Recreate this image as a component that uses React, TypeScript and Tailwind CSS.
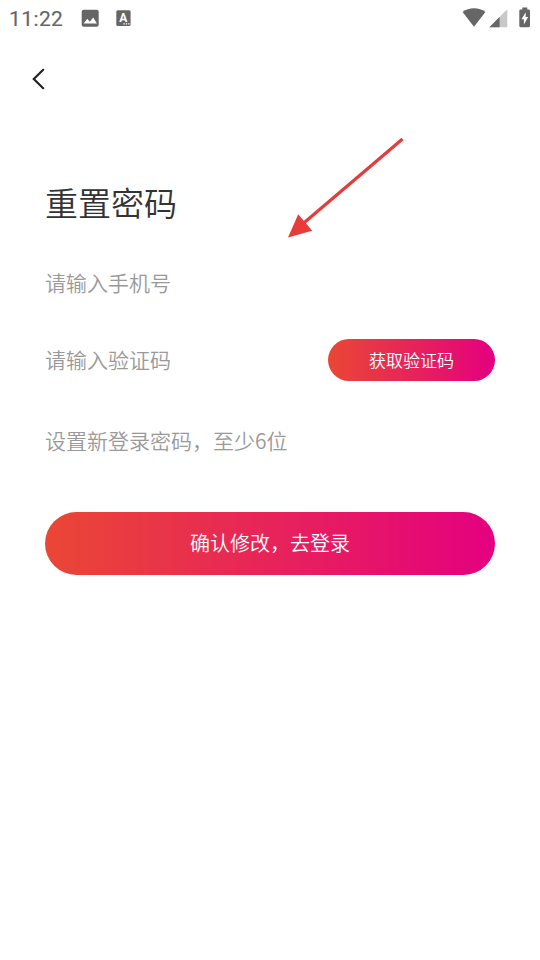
import React, { useState } from 'react';

const StatusBar: React.FC = () => (
  <header className="flex h-9 items-center justify-between pl-[9px] pr-[9px] text-[#666666]">
    <div className="flex items-center">
      <span className="w-[54px] whitespace-nowrap pt-0.5 font-['Roboto',sans-serif] text-[21px] font-normal leading-9 tracking-[0.4px] [-webkit-text-stroke:0.15px_#666666]">
        11:22
      </span>
      <svg className="ml-[18px]" width="18" height="18" viewBox="0 0 18 18" aria-hidden="true">
        <rect x="0.7" y="0.8" width="17" height="17" rx="2" fill="currentColor" />
        <path d="M2.6 14.500 6.300 9.800l2.500 3 3.400-4.300 3.700 6z" fill="#fff" />
      </svg>
      <svg className="ml-[17px]" width="16" height="18" viewBox="0 0 16 18" aria-hidden="true">
        <rect x="0.300" y="1.300" width="14.300" height="15.600" rx="1.500" fill="currentColor" />
        <text
          x="7.400"
          y="12.800"
          textAnchor="middle"
          fill="#fff"
          className="font-['Roboto',sans-serif] text-[12px] font-bold"
        >
          A
        </text>
        <path d="M7.400 14.900h1.400M9.800 14.900h1.400M12.200 14.900h1.400" stroke="#fff" strokeWidth="1.300" />
      </svg>
    </div>

    <div className="flex items-center">
      <svg width="24" height="20" viewBox="0 0 24 20" aria-hidden="true">
        <path d="M0.6 3.9C3.8 1.5 7.7 0.3 12 0.3s8.2 1.2 11.4 3.6L12 18.700z" fill="currentColor" />
      </svg>
      <svg className="ml-[3px]" width="19" height="19" viewBox="0 0 19 19" aria-hidden="true">
        <path d="M18.300 0.300v18H0.300z" fill="#c8c8c8" />
        <path d="M10.600 8v10.300H0.300z" fill="currentColor" />
      </svg>
      <svg className="mb-0.5 ml-[11px]" width="12" height="21" viewBox="0 0 12 21" aria-hidden="true">
        <path
          d="M3.300 0.500h5v2h1.300c.8 0 1.400.6 1.400 1.400v14.900c0 .8-.6 1.400-1.400 1.400H1.700c-.8 0-1.400-.6-1.400-1.400V3.900c0-.8.6-1.400 1.400-1.400h1.600z"
          fill="currentColor"
        />
        <path d="M6.700 5.200 2.500 12.200h2.400v5.200l4.200-7.400H6.700z" fill="#fff" />
      </svg>
    </div>
  </header>
);

// Annotation arrow pointing at the form
const PointerArrow: React.FC = () => (
  <svg
    className="pointer-events-none absolute left-[280px] top-[130px]"
    width="130"
    height="115"
    viewBox="0 0 130 115"
    aria-hidden="true"
  >
    <path d="M122.500 9 22 94.500" stroke="#e23c3c" strokeWidth="3.200" />
    <path d="M8 107.500 18.200 84.200 32.200 100.800z" fill="#e83c3a" />
  </svg>
);

const fieldClass =
  'h-[42px] min-w-0 flex-1 bg-transparent text-[21px] leading-[42px] text-[#333333] outline-none placeholder:text-[#999999] placeholder:opacity-100';

const App: React.FC = () => {
  const [phone, setPhone] = useState('');
  const [code, setCode] = useState('');
  const [password, setPassword] = useState('');

  return (
    <div className="relative min-h-[960px] w-full bg-white font-['Noto_Sans_CJK_SC',sans-serif] font-[350]">
      <StatusBar />

      <nav className="flex h-[86px] items-center pl-[31px]">
        <button type="button" aria-label="返回">
          <svg width="16" height="24" viewBox="0 0 16 24" aria-hidden="true">
            <path
              d="M12.200 2.800 2.800 12l9.400 9.200"
              fill="none"
              stroke="#222222"
              strokeWidth="2.200"
              strokeLinecap="round"
            />
          </svg>
        </button>
      </nav>

      <main className="px-[45px] pt-[55px]">
        <h1 className="text-[33px] font-[350] leading-[50px] text-[#333333]">重置密码</h1>

        <form onSubmit={(e) => e.preventDefault()}>
          <div className="mt-[34px] flex">
            <input
              className={fieldClass}
              type="tel"
              placeholder="请输入手机号"
              value={phone}
              onChange={(e) => setPhone(e.target.value)}
            />
          </div>

          <div className="mt-9 flex items-center">
            <input
              className={`${fieldClass} pb-0.5`}
              placeholder="请输入验证码"
              value={code}
              onChange={(e) => setCode(e.target.value)}
            />
            <button
              type="button"
              className="h-[42px] w-[167px] rounded-full bg-linear-to-r/srgb from-[#ea4735] to-[#e4007f] pb-px text-[17px] text-white"
            >
              获取验证码
            </button>
          </div>

          <div className="mt-[38px] flex">
            <input
              className={fieldClass}
              type="password"
              placeholder="设置新登录密码，至少6位"
              value={password}
              onChange={(e) => setPassword(e.target.value)}
            />
          </div>

          <button
            type="submit"
            className="mt-[51px] h-[63px] w-full rounded-full bg-linear-to-r/srgb from-[#ea4735] to-[#e4007f] pb-0.5 text-[20px] text-white"
          >
            确认修改，去登录
          </button>
        </form>
      </main>

      <PointerArrow />
    </div>
  );
};

export default App;
